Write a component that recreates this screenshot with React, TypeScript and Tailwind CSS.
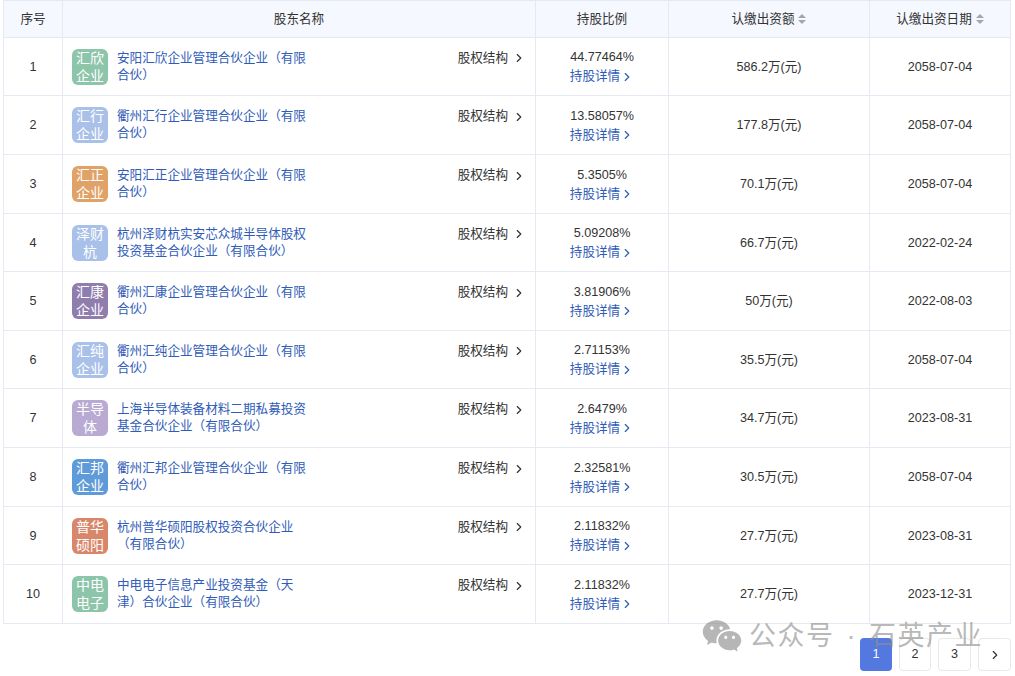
import { ChevronRight } from "lucide-react";
import { RiWechatFill } from "react-icons/ri";

const rows = [
  { h: "h-[58px]", logo: ["汇欣", "企业"], bg: "bg-[#8cc5a9]", name: "安阳汇欣企业管理合伙企业（有限合伙）", pct: "44.77464%", amt: "586.2万(元)", date: "2058-07-04" },
  { h: "h-[59px]", logo: ["汇行", "企业"], bg: "bg-[#a9c1e8]", name: "衢州汇行企业管理合伙企业（有限合伙）", pct: "13.58057%", amt: "177.8万(元)", date: "2058-07-04" },
  { h: "h-[59px]", logo: ["汇正", "企业"], bg: "bg-[#e0a267]", name: "安阳汇正企业管理合伙企业（有限合伙）", pct: "5.3505%", amt: "70.1万(元)", date: "2058-07-04" },
  { h: "h-[58px]", logo: ["泽财", "杭"], bg: "bg-[#a9c1e8]", name: "杭州泽财杭实安芯众城半导体股权投资基金合伙企业（有限合伙）", pct: "5.09208%", amt: "66.7万(元)", date: "2022-02-24" },
  { h: "h-[59px]", logo: ["汇康", "企业"], bg: "bg-[#8f7dae]", name: "衢州汇康企业管理合伙企业（有限合伙）", pct: "3.81906%", amt: "50万(元)", date: "2022-08-03" },
  { h: "h-[58px]", logo: ["汇纯", "企业"], bg: "bg-[#a9c1e8]", name: "衢州汇纯企业管理合伙企业（有限合伙）", pct: "2.71153%", amt: "35.5万(元)", date: "2058-07-04" },
  { h: "h-[59px]", logo: ["半导", "体"], bg: "bg-[#b9aad3]", name: "上海半导体装备材料二期私募投资基金合伙企业（有限合伙）", pct: "2.6479%", amt: "34.7万(元)", date: "2023-08-31" },
  { h: "h-[59px]", logo: ["汇邦", "企业"], bg: "bg-[#5f9bd8]", name: "衢州汇邦企业管理合伙企业（有限合伙）", pct: "2.32581%", amt: "30.5万(元)", date: "2058-07-04" },
  { h: "h-[58px]", logo: ["普华", "硕阳"], bg: "bg-[#d9876a]", name: "杭州普华硕阳股权投资合伙企业（有限合伙）", pct: "2.11832%", amt: "27.7万(元)", date: "2023-08-31" },
  { h: "h-[59px]", logo: ["中电", "电子"], bg: "bg-[#8cc5a9]", name: "中电电子信息产业投资基金（天津）合伙企业（有限合伙）", pct: "2.11832%", amt: "27.7万(元)", date: "2023-12-31" },
];

function Sort() {
  return (
    <span className="inline-flex flex-col gap-[2px] ml-[4px] align-middle">
      <span className="w-0 h-0 border-x-[4px] border-x-transparent border-b-[4px] border-b-[#a3a6ad]" />
      <span className="w-0 h-0 border-x-[4px] border-x-transparent border-t-[4px] border-t-[#a3a6ad]" />
    </span>
  );
}

const th = "border border-[#e5e9f2] bg-[#f5f8fe] font-normal text-center p-0";
const td = "border border-[#e5e9f2] text-center p-0 align-middle";
const tdn = "border border-[#e5e9f2] text-center p-0 pt-[1px] align-middle";

export default function App() {
  return (
    <div className="relative w-[1015px] h-[676px] overflow-hidden bg-white text-[#333] text-[12.6px] font-['Liberation_Sans','Noto_Sans_CJK_SC',sans-serif]">
      <div className="pl-[3px]">
        <table className="w-[1007px] table-fixed border-collapse">
          <colgroup>
            <col className="w-[59px]" />
            <col className="w-[473px]" />
            <col className="w-[133px]" />
            <col className="w-[201px]" />
            <col className="w-[141px]" />
          </colgroup>
          <thead>
            <tr className="h-[37px]">
              <th className={th}>序号</th>
              <th className={th}>股东名称</th>
              <th className={th}>持股比例</th>
              <th className={th}>认缴出资额<Sort /></th>
              <th className={th}>认缴出资日期<Sort /></th>
            </tr>
          </thead>
          <tbody>
            {rows.map((r, i) => (
              <tr key={i} className={r.h}>
                <td className={tdn}>{i + 1}</td>
                <td className={td}>
                  <div className="flex items-start pl-[9px] pr-[9px] text-left">
                    <div className={`w-9 h-9 shrink-0 rounded-[6px] ${r.bg} text-white text-[14px] leading-[18px] text-center`}>
                      <div>{r.logo[0]}</div>
                      <div>{r.logo[1]}</div>
                    </div>
                    <a className="w-[190px] ml-[9px] pt-[1px] text-[#2f5cb8] leading-[17px]">{r.name}</a>
                    <div className="ml-auto pt-[1px] flex items-center leading-[17px]">
                      股权结构
                      <ChevronRight className="w-[14px] h-[14px] ml-[4px] text-[#333]" strokeWidth={2} />
                    </div>
                  </div>
                </td>
                <td className={td}>
                  <div className="leading-[19px] pt-[1px]">{r.pct}</div>
                  <div className="leading-[19px] text-[#2f5cb8] flex items-center justify-center">
                    持股详情
                    <ChevronRight className="w-[14px] h-[14px]" strokeWidth={2} />
                  </div>
                </td>
                <td className={tdn}>{r.amt}</td>
                <td className={tdn}>{r.date}</td>
              </tr>
            ))}
          </tbody>
        </table>
      </div>

      <div className="flex justify-end gap-[7px] pr-[4px] mt-[14px]">
        <div className="w-[32px] h-[33px] rounded-[4px] bg-[#5379e0] text-white flex items-center justify-center">1</div>
        <div className="w-[32px] h-[33px] rounded-[4px] border border-[#e8e8e8] flex items-center justify-center">2</div>
        <div className="w-[33px] h-[33px] rounded-[4px] border border-[#e8e8e8] flex items-center justify-center">3</div>
        <div className="w-[33px] h-[33px] rounded-[4px] border border-[#e8e8e8] flex items-center justify-center">
          <ChevronRight className="w-[14px] h-[14px]" />
        </div>
      </div>

      <div className="absolute left-[701px] top-[615px] flex items-center text-[#8f8f8f]/65">
        <RiWechatFill className="w-[42px] h-[42px]" />
        <span className="ml-[6px] text-[27px] leading-[38px] tracking-[1.5px] [word-spacing:3px] whitespace-nowrap">公众号 · 石英产业</span>
      </div>
    </div>
  );
}
